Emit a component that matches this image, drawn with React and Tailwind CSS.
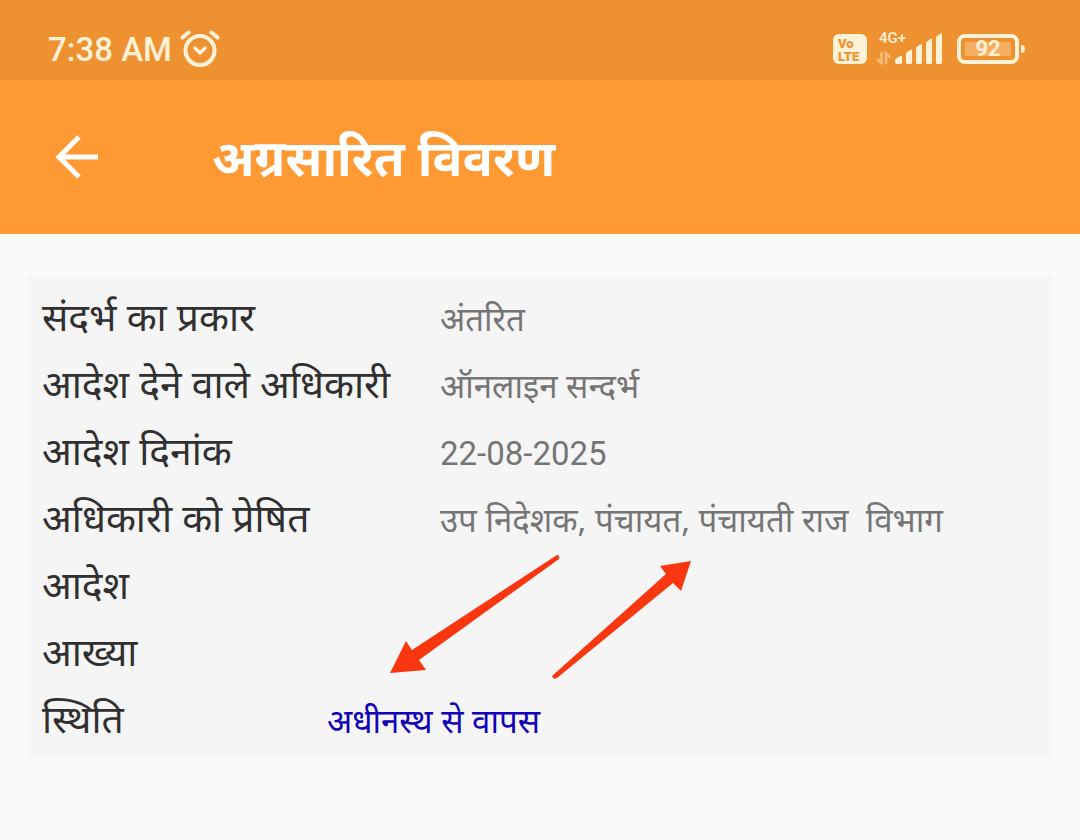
import React from 'react';

const rows = [
  { label: 'संदर्भ का प्रकार', value: 'अंतरित' },
  { label: 'आदेश देने वाले अधिकारी', value: 'ऑनलाइन सन्दर्भ' },
  { label: 'आदेश दिनांक', value: '22-08-2025', latin: true },
  { label: 'अधिकारी को प्रेषित', value: 'उप निदेशक, पंचायत, पंचायती राज  विभाग' },
  { label: 'आदेश', value: '' },
  { label: 'आख्या', value: '' },
];

function AlarmIcon() {
  return (
    <svg className="w-10 h-10" viewBox="0 0 40 40" fill="none" stroke="currentColor" strokeLinecap="round" strokeLinejoin="round">
      <circle cx="20" cy="20.5" r="14.5" strokeWidth="4" />
      <path d="M15 18l5 5 5-5" strokeWidth="3.5" />
      <path d="M2.500 7.500l6-5M37.500 7.500l-6-5" strokeWidth="4" />
    </svg>
  );
}

function SignalIcon() {
  return (
    <svg className="w-full h-full" viewBox="0 0 68 32" fill="currentColor">
      <path d="M6.500 19v11L2 26M11 31V20.500l4 4" fill="none" stroke="currentColor" strokeWidth="2.500" opacity=".45" />
      <path d="M20 29v-2.500q3-3 7-4v7q0 1.500-1.500 1.500h-4Q20 31 20 29z" />
      <path d="M31 20q3-3 6-3.500v13q0 1.500-1.500 1.500h-3Q31 31 31 29.500z" />
      <path d="M41 14.500q3-3 6-3.500v18.500q0 1.500-1.500 1.500h-3Q41 31 41 29.500z" />
      <path d="M51 9.500q3-3 6-4v24q0 1.500-1.500 1.500h-3Q51 31 51 29.500z" />
      <path d="M61 4q3-3 6-4v29.500q0 1.500-1.500 1.500h-3Q61 31 61 29.500z" />
    </svg>
  );
}

function StatusBar() {
  return (
    <div className="h-20 px-12 pt-5 flex items-center justify-between bg-[#ee9231] text-[#fff1d6] font-['Roboto',sans-serif]">
      <div className="flex items-center gap-2">
        <span className="text-[33px] leading-10 font-medium">7:38 AM</span>
        <AlarmIcon />
      </div>
      <div className="pr-[7px] pb-[2px] flex items-center">
        <div className="w-[34px] h-[30px] rounded-md bg-[#fff1d6] text-[#ee9231] text-[13px] leading-[13px] font-black pl-[5px] pt-[3px]">
          Vo
          <br />
          LTE
        </div>
        <div className="relative ml-2 w-[68px] h-8">
          <SignalIcon />
          <span className="absolute left-1 -top-[3px] text-[15px] leading-4 font-medium">4G+</span>
        </div>
        <div className="ml-[14px] w-[62px] h-[30px] rounded-lg border-4 border-current p-1 flex">
          <div className="flex-1 flex items-center justify-center bg-[#f5ae62] text-[22px] leading-6 font-bold">92</div>
        </div>
        <div className="ml-[2px] w-1 h-2 rounded-r-sm bg-current" />
      </div>
    </div>
  );
}

function AppBar() {
  return (
    <header className="h-[154px] pl-12 flex items-center bg-[#ff9933] text-white">
      <button type="button" aria-label="Back" className="w-14 h-14 flex items-center justify-center">
        <svg className="w-11 h-11" viewBox="0 0 44 44" fill="none" stroke="currentColor" strokeWidth="5">
          <path d="M25 2L5 22l20 20M5 22h39" />
        </svg>
      </button>
      <h1 className="ml-[108px] text-[50px] leading-[60px] font-bold">अग्रसारित विवरण</h1>
    </header>
  );
}

function Arrows() {
  return (
    <svg className="absolute left-[360px] top-[277px] w-[304px] h-32" viewBox="0 0 304 128" fill="#f83610" aria-hidden="true">
      <path d="M169 2q3 0 2 4L31 107l7 10-36 3 16-32 6 9z" />
      <path d="M164 123q1 4 5 2L285 30l8 8 10-30-31 5 6 8z" />
    </svg>
  );
}

export default function App() {
  return (
    <div className="min-h-screen bg-[#fafafa] font-['Noto_Sans',sans-serif]">
      <StatusBar />
      <AppBar />
      <main className="px-7 py-[42px]">
        <section className="relative bg-[#f5f5f5] px-[14px] pt-[6px] pb-[7px]">
          <dl>
            {rows.map((row) => (
              <div key={row.label} className="h-[67px] flex items-baseline">
                <dt className="w-[398px] shrink-0 text-[39px] leading-[67px] text-[#303030]">{row.label}</dt>
                <dd className={row.latin ? "text-[33px] leading-10 text-[#757575] font-['Roboto',sans-serif]" : 'text-[33px] leading-10 text-[#757575] whitespace-pre'}>
                  {row.value}
                </dd>
              </div>
            ))}
            <div className="h-[67px] flex items-baseline">
              <dt className="w-[285px] shrink-0 text-[39px] leading-[67px] text-[#303030]">स्थिति</dt>
              <dd className="text-[33px] leading-10 text-[#1000b8]">अधीनस्थ से वापस</dd>
            </div>
          </dl>
          <Arrows />
        </section>
      </main>
    </div>
  );
}
